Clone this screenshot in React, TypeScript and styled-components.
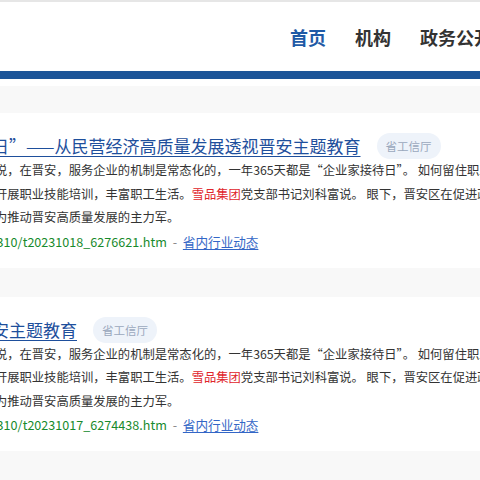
import React from "react";
import styled, { createGlobalStyle } from "styled-components";

const GlobalStyle = createGlobalStyle`
  html, body {
    margin: 0;
    padding: 0;
    background: #f8f8f8;
    overflow: hidden;
    font-family: "Noto Sans CJK SC", "Noto Sans", sans-serif;
  }
`;

const Page = styled.div`
  width: 480px;
  height: 480px;
  overflow: hidden;
  border-top: 2px solid #e6e6e6;
  box-sizing: border-box;
`;

const Header = styled.header`
  background: #fff;
  height: 69px;
  border-bottom: 8px solid #1c5599;
  display: flex;
  align-items: center;
`;

const Container = styled.div`
  width: 1200px;
  flex-shrink: 0;
  margin-left: -62px;
  box-sizing: border-box;
`;

const NavRow = styled.nav`
  display: flex;
  gap: 29px;
  padding-left: 352px;
  margin-top: 1px;
`;

const NavItem = styled.a<{ $active?: boolean }>`
  font-size: 18px;
  font-weight: 700;
  line-height: 24px;
  color: ${(p) => (p.$active ? "#1f5aa6" : "#333")};
  text-decoration: none;
  white-space: nowrap;
`;

const WhiteStrip = styled.div`
  height: 7px;
  background: #fff;
`;

const Main = styled.main`
  display: flex;
  padding-top: 27px;
`;

const CardList = styled.div`
  display: flex;
  flex-direction: column;
  gap: 29px;
`;

const Card = styled.article`
  background: #fff;
  padding: 20px 20px 14px 20px;
`;

const TitleRow = styled.div`
  display: flex;
  align-items: center;
  height: 26px;
  gap: 16px;
`;

const Title = styled.a`
  font-size: 17px;
  line-height: 24px;
  color: #1e4f9c;
  text-decoration: underline;
  text-underline-offset: 3px;
  white-space: nowrap;
`;

const Tag = styled.span`
  display: inline-flex;
  align-items: center;
  height: 26px;
  padding: 0 9px;
  border-radius: 13px;
  background: #eef3fa;
  color: #9aa8bd;
  font-size: 11.5px;
  white-space: nowrap;
`;

const Body = styled.p`
  margin: 0;
  font-size: 12.3px;
  line-height: 23.5px;
  color: #333;
  white-space: nowrap;
`;

const Red = styled.span`
  color: #e0252b;
`;

const UrlLine = styled.div`
  font-size: 12.6px;
  line-height: 24px;
  white-space: nowrap;
  color: #888;
  word-spacing: 3px;
`;

const Url = styled.span`
  color: #178a2c;
`;

const Category = styled.a`
  color: #3366c6;
  text-decoration: underline;
  text-underline-offset: 2px;
`;

type Item = {
  title: string;
  tag: string;
  lines: React.ReactNode[];
  url: string;
  category: string;
};

const items: Item[] = [
  {
    title: "接待日”——从民营经济高质量发展透视晋安主题教育",
    tag: "省工信厅",
    lines: [
      "负责人说，在晋安，服务企业的机制是常态化的，一年365天都是“企业家接待日”。 如何留住职工，让他们安心工作",
      <>
        企业还开展职业技能培训，丰富职工生活。<Red>雪品集团</Red>党支部书记刘科富说。 眼下，晋安区在促进政企沟通
      </>,
      "企业成为推动晋安高质量发展的主力军。",
    ],
    url: "dt/202310/t20231018_6276621.htm",
    category: "省内行业动态",
  },
  {
    title: "视晋安主题教育",
    tag: "省工信厅",
    lines: [
      "负责人说，在晋安，服务企业的机制是常态化的，一年365天都是“企业家接待日”。 如何留住职工，让他们安心工作",
      <>
        企业还开展职业技能培训，丰富职工生活。<Red>雪品集团</Red>党支部书记刘科富说。 眼下，晋安区在促进政企沟通
      </>,
      "企业成为推动晋安高质量发展的主力军。",
    ],
    url: "dt/202310/t20231017_6274438.htm",
    category: "省内行业动态",
  },
];

export default function App() {
  return (
    <>
      <GlobalStyle />
      <Page>
        <Header>
          <Container>
            <NavRow>
              <NavItem $active>首页</NavItem>
              <NavItem>机构</NavItem>
              <NavItem>政务公开</NavItem>
              <NavItem>互动交流</NavItem>
            </NavRow>
          </Container>
        </Header>
        <WhiteStrip />
        <Main>
          <Container>
            <CardList>
              {items.map((it, i) => (
                <Card key={i}>
                  <TitleRow>
                    <Title>{it.title}</Title>
                    <Tag>{it.tag}</Tag>
                  </TitleRow>
                  {it.lines.map((l, j) => (
                    <Body key={j}>{l}</Body>
                  ))}
                  <UrlLine>
                    <Url>{it.url}</Url> - <Category>{it.category}</Category>
                  </UrlLine>
                </Card>
              ))}
            </CardList>
          </Container>
        </Main>
      </Page>
    </>
  );
}
